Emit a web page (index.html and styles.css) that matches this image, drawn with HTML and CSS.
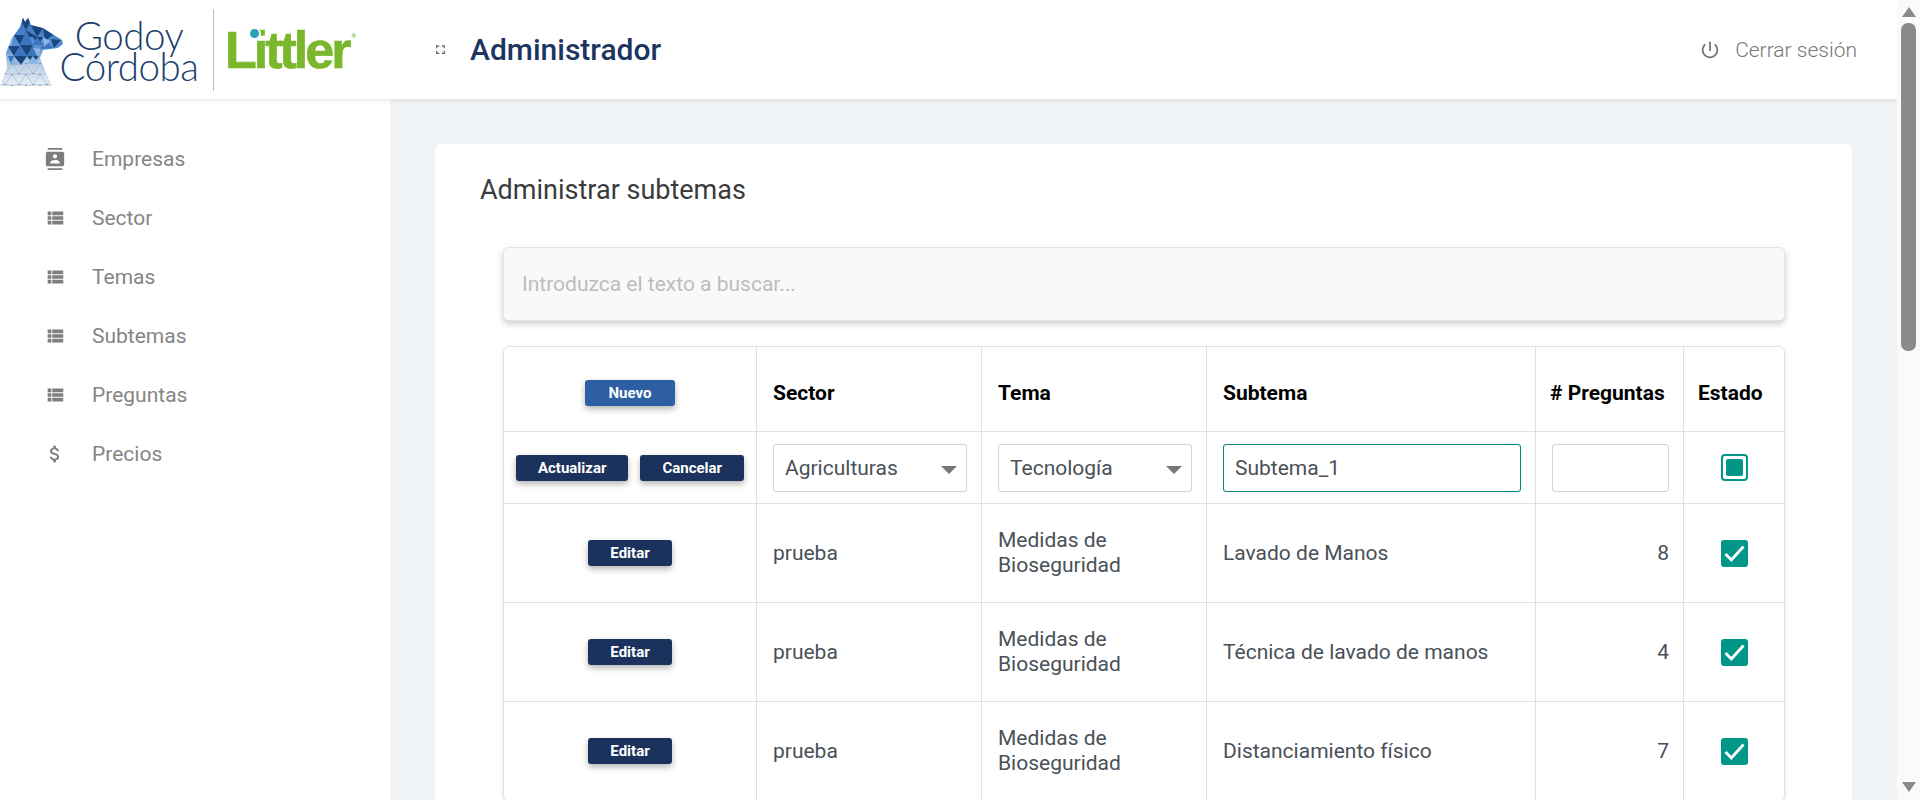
FILE: index.html
```html
<!DOCTYPE html>
<html lang="en">
<head>
  <meta charset="UTF-8" />
  <title>Administrador</title>
  <link rel="stylesheet" href="styles.css">
</head>
<body>

  <svg class="defs" width="0" height="0">
    <symbol id="i-contacts" viewBox="0 0 24 24"><path d="M20 0H4v2h16V0zM4 24h16v-2H4v2zM20 4H4c-1.1 0-2 .9-2 2v12c0 1.1.9 2 2 2h16c1.1 0 2-.9 2-2V6c0-1.1-.9-2-2-2zm-8 2.75c1.24 0 2.25 1.01 2.25 2.25s-1.01 2.25-2.25 2.25S9.75 10.24 9.75 9 10.76 6.75 12 6.75zM17 17H7v-1.5c0-1.67 3.33-2.5 5-2.5s5 .83 5 2.5V17z"/></symbol>
    <symbol id="i-list" viewBox="0 0 24 24"><path d="M4 14h4v-4H4v4zm0 5h4v-4H4v4zM4 9h4V5H4v4zm5 5h12v-4H9v4zm0 5h12v-4H9v4zM9 5v4h12V5H9z"/></symbol>
    <symbol id="i-money" viewBox="0 0 24 24"><path d="M11.8 10.9c-2.27-.59-3-1.2-3-2.15 0-1.09 1.01-1.85 2.7-1.85 1.78 0 2.44.85 2.5 2.1h2.21c-.07-1.72-1.12-3.3-3.21-3.81V3h-3v2.16c-1.94.42-3.5 1.68-3.5 3.61 0 2.31 1.91 3.46 4.7 4.13 2.5.6 3 1.48 3 2.41 0 .69-.49 1.79-2.7 1.79-2.06 0-2.87-.92-2.98-2.1h-2.2c.12 2.19 1.76 3.42 3.68 3.83V21h3v-2.15c1.95-.37 3.5-1.5 3.5-3.55 0-2.84-2.43-3.81-4.7-4.4z"/></symbol>
    <symbol id="i-check" viewBox="0 0 24 24"><path d="M4 12.5l5.2 5.2L20 5.8" fill="none" stroke="#fff" stroke-width="2.6"/></symbol>
  </svg>

  <div class="window">
    <div class="viewport">

      <header class="topbar">
        <div class="logo">
          <svg class="horse" width="64" height="84" viewBox="0 0 64 84">
            <defs>
              <clipPath id="horseShape">
                <path d="M23 10l2 4 3-4 3 7 12 3 19 12 1 4-5 4-15 2-3 8 5 13 7 15H0l7-18-1-15 6-15 8-11z"/>
              </clipPath>
              <linearGradient id="horseFade" x1="0" y1="0" x2="0" y2="1">
                <stop offset="0" stop-color="#2a62a8"/>
                <stop offset=".5" stop-color="#5f97d6"/>
                <stop offset=".66" stop-color="#b9cde4"/>
                <stop offset="1" stop-color="#f7f9fc"/>
              </linearGradient>
              <pattern id="mesh" x="-2" y="55" width="14" height="11" patternUnits="userSpaceOnUse">
                <path d="M0 0h14L7 11zM0 11h14" fill="none" stroke="#9bb2cc" stroke-width=".6"/>
                <circle cx="0" cy="0" r="1" fill="#6f8fb4"/>
                <circle cx="14" cy="0" r="1" fill="#6f8fb4"/>
                <circle cx="7" cy="11" r="1" fill="#6f8fb4"/>
              </pattern>
            </defs>
            <g clip-path="url(#horseShape)">
              <rect width="64" height="84" fill="url(#horseFade)"/>
              <path class="f-dark" d="M20 10h12l-6 12zM31 17l12 3-6 9zM14 27h12l-6 10zM26 22l11 7H25zM8 38h12l-6 10zM20 37h13l-6 11zM33 29h10l-5 8zM43 20l10 7-8 6zM14 48h13l-6 9zM27 48h12l-6 8zM51 31l10 1-7 8z"/>
              <path class="f-mid" d="M26 22l-6 15h13zM37 29l-4 8h10zM45 33l9 7-14 1zM20 37l-6 11h13zM33 37l-6 11h12zM8 48h6l-3 9z"/>
              <path class="f-light" d="M43 29l7 4-6 6zM12 28h2l-3 10h-3zM33 40l8 1-3 8zM27 56l6-8 6 8zM14 50l6 7H9z"/>
              <rect y="55" width="64" height="29" fill="url(#mesh)"/>
            </g>
          </svg>
          <div class="logo-name"><span>Godoy</span><span>Córdoba</span></div>
          <div class="logo-rule"></div>
          <div class="littler">Littler<sup>®</sup><i class="littler-dot"></i></div>
        </div>
        <div class="topbar-title">
          <svg class="icon-expand" viewBox="0 0 24 24"><path d="M7 14H5v5h5v-2H7v-3zm-2-4h2V7h3V5H5v5zm12 7h-3v2h5v-5h-2v3zM14 5v2h3v3h2V5h-5z"/></svg>
          <h1>Administrador</h1>
        </div>
        <a class="logout">
          <svg viewBox="0 0 24 24"><path d="M13 3h-2v10h2V3zm4.83 2.17l-1.42 1.42C17.99 7.86 19 9.81 19 12c0 3.87-3.13 7-7 7s-7-3.13-7-7c0-2.19 1.01-4.14 2.58-5.42L6.17 5.17C4.23 6.82 3 9.26 3 12c0 4.97 4.03 9 9 9s9-4.03 9-9c0-2.74-1.23-5.18-3.17-6.83z"/></svg>
          Cerrar sesión
        </a>
      </header>

      <div class="layout">
        <nav class="sidebar">
          <a class="nav-item"><svg><use href="#i-contacts"/></svg>Empresas</a>
          <a class="nav-item"><svg><use href="#i-list"/></svg>Sector</a>
          <a class="nav-item"><svg><use href="#i-list"/></svg>Temas</a>
          <a class="nav-item"><svg><use href="#i-list"/></svg>Subtemas</a>
          <a class="nav-item"><svg><use href="#i-list"/></svg>Preguntas</a>
          <a class="nav-item"><svg><use href="#i-money"/></svg>Precios</a>
        </nav>

        <main class="content">
          <section class="card">
            <h2>Administrar subtemas</h2>
            <div class="search">Introduzca el texto a buscar...</div>

            <table class="grid">
              <colgroup>
                <col class="col-actions"><col class="col-sector"><col class="col-tema"><col class="col-subtema"><col class="col-count"><col class="col-state">
              </colgroup>
              <thead>
                <tr>
                  <th class="center"><button class="btn btn-new">Nuevo</button></th>
                  <th>Sector</th>
                  <th>Tema</th>
                  <th>Subtema</th>
                  <th class="tight"># Preguntas</th>
                  <th class="tight">Estado</th>
                </tr>
              </thead>
              <tbody>
                <tr class="row-edit">
                  <td class="center nowrap"><button class="btn">Actualizar</button><button class="btn">Cancelar</button></td>
                  <td><div class="field select">Agriculturas<i class="caret"></i></div></td>
                  <td><div class="field select">Tecnología<i class="caret"></i></div></td>
                  <td><div class="field active">Subtema_1</div></td>
                  <td><div class="field"></div></td>
                  <td class="center"><span class="box-empty"><i></i></span></td>
                </tr>
                <tr class="row-data">
                  <td class="center"><button class="btn btn-edit">Editar</button></td>
                  <td>prueba</td>
                  <td>Medidas de Bioseguridad</td>
                  <td>Lavado de Manos</td>
                  <td class="num">8</td>
                  <td class="center"><span class="box"><svg><use href="#i-check"/></svg></span></td>
                </tr>
                <tr class="row-data">
                  <td class="center"><button class="btn btn-edit">Editar</button></td>
                  <td>prueba</td>
                  <td>Medidas de Bioseguridad</td>
                  <td>Técnica de lavado de manos</td>
                  <td class="num">4</td>
                  <td class="center"><span class="box"><svg><use href="#i-check"/></svg></span></td>
                </tr>
                <tr class="row-data">
                  <td class="center"><button class="btn btn-edit">Editar</button></td>
                  <td>prueba</td>
                  <td>Medidas de Bioseguridad</td>
                  <td>Distanciamiento físico</td>
                  <td class="num">7</td>
                  <td class="center"><span class="box"><svg><use href="#i-check"/></svg></span></td>
                </tr>
              </tbody>
            </table>
          </section>
        </main>
      </div>
    </div>

    <div class="scrollbar">
      <i class="arrow-up"></i>
      <div class="track"><div class="thumb"></div></div>
      <i class="arrow-down"></i>
    </div>
  </div>

</body>
</html>
```

FILE: styles.css
```css
* {
  box-sizing: border-box;
}

html, body {
  margin: 0;
  padding: 0;
  height: 800px;
  overflow: hidden;
}

body {
  font-family: Roboto, sans-serif;
  color: #495057;
  background: #fff;
}

.defs {
  display: block;
  height: 0;
}

.window {
  display: flex;
  height: 800px;
}

.viewport {
  flex: 1;
  min-width: 0;
  height: 800px;
  overflow: hidden;
  display: flex;
  flex-direction: column;
}

/* top bar */
.topbar {
  height: 99px;
  flex: none;
  display: flex;
  align-items: center;
  background: #fff;
  box-shadow: 0 2px 4px rgba(0,0,0,0.08);
  position: relative;
  z-index: 2;
  padding-right: 40px;
}

.logo {
  width: 433px;
  flex: none;
  display: flex;
  align-items: center;
}

.horse {
  flex: none;
  align-self: flex-start;
}

.f-dark { fill: #1a4680; }
.f-mid { fill: #3a75bd; }
.f-light { fill: #8db6e4; }

.logo-name {
  width: 142px;
  margin: 2px 0 0 -6px;
  display: flex;
  flex-direction: column;
  align-items: center;
  font-family: Lato, sans-serif;
  font-weight: 300;
  font-size: 38.5px;
  line-height: 31px;
  letter-spacing: -0.5px;
  color: #1d3f6e;
}

.logo-rule {
  width: 1px;
  height: 82px;
  margin-left: 13px;
  background: #bdbdbd;
}

.littler {
  position: relative;
  margin-left: 11px;
  font-family: "Liberation Sans", sans-serif;
  font-weight: 700;
  font-size: 52px;
  letter-spacing: -3px;
  line-height: 50px;
  color: #7ab72c;
  -webkit-text-stroke: 0.7px #7ab72c;
}

.littler sup {
  position: absolute;
  top: 8px;
  margin-left: 3px;
  font-size: 6px;
  line-height: 6px;
  letter-spacing: 0;
  -webkit-text-stroke: 0;
}

.littler-dot {
  position: absolute;
  left: 25px;
  top: 4px;
  width: 9px;
  height: 9px;
  border-radius: 50%;
  background: #2a9fb5;
  box-shadow: 0 0 0 2px #fff;
}

.topbar-title {
  flex: 1;
  display: flex;
  align-items: center;
}

.icon-expand {
  width: 15px;
  height: 15px;
  fill: #666;
}

h1 {
  margin: 0 0 0 22px;
  font-size: 30px;
  font-weight: 500;
  color: #1c3560;
}

.logout {
  display: flex;
  align-items: center;
  gap: 14px;
  font-size: 21px;
  font-weight: 300;
  color: #777;
}

.logout svg {
  width: 22px;
  height: 22px;
  fill: #777;
}

/* sidebar */
.layout {
  flex: 1;
  min-height: 0;
  display: flex;
}

.sidebar {
  width: 390px;
  flex: none;
  padding-top: 30px;
  background: #fff;
}

.nav-item {
  display: flex;
  align-items: center;
  height: 59px;
  padding-left: 44px;
  font-size: 21px;
  color: #858585;
}

.nav-item svg {
  width: 22px;
  height: 22px;
  margin-right: 26px;
  fill: #7e7e7e;
}

/* content */
.content {
  flex: 1;
  min-width: 0;
  padding: 45px 45px 0;
  background: #eff3f5;
}

.card {
  background: #fff;
  border-radius: 6px;
  padding: 28px 67px 0 45px;
}

h2 {
  margin: 0 0 39px;
  font-size: 27px;
  font-weight: 400;
  line-height: 36px;
  color: #3b3b3b;
}

.search {
  margin: 0 0 25px 23px;
  height: 74px;
  padding: 0 18px;
  display: flex;
  align-items: center;
  background: #f9f9f9;
  border: 1px solid #e3e3e3;
  border-radius: 6px;
  box-shadow: 0 3px 6px rgba(0,0,0,0.2);
  font-size: 21px;
  color: #bdbdbd;
}

.grid {
  margin-left: 23px;
  width: 1282px;
  table-layout: fixed;
  border-collapse: separate;
  border-spacing: 0;
  border: 1px solid #dee2e6;
  border-radius: 6px;
  box-shadow: 0 1px 4px rgba(0,0,0,0.1);
  font-size: 21px;
  color: #495057;
}

.col-actions { width: 253px; }
.col-sector { width: 225px; }
.col-tema { width: 225px; }
.col-subtema { width: 329px; }
.col-count { width: 148px; }
.col-state { width: 100px; }

.grid th, .grid td {
  padding: 0 14px 0 16px;
  border-right: 1px solid #dee2e6;
  border-bottom: 1px solid #dee2e6;
  text-align: left;
}

.grid th:last-child, .grid td:last-child {
  border-right: none;
}

.grid th {
  height: 85px;
  padding-top: 7px;
  font-weight: 700;
  font-size: 21px;
  color: #000;
}

.grid .tight {
  padding: 7px 14px 0;
  white-space: nowrap;
}

.grid .center {
  padding-left: 0;
  padding-right: 0;
  text-align: center;
}

.grid .nowrap {
  white-space: nowrap;
}

.grid .num {
  text-align: right;
}

.row-edit td {
  height: 72px;
}

.row-data td {
  height: 99px;
  line-height: 25px;
}

/* buttons */
.btn {
  height: 26px;
  padding: 0 22px;
  border: none;
  border-radius: 3px;
  background: #1b335c;
  color: #fff;
  font-family: Roboto, sans-serif;
  font-size: 15px;
  font-weight: 700;
  box-shadow: 0 3px 6px rgba(0,0,0,0.3);
  vertical-align: middle;
}

.btn + .btn {
  margin-left: 12px;
}

.btn-new {
  width: 90px;
  padding: 0;
  background: #2e5ea3;
}

.btn-edit {
  width: 84px;
  padding: 0;
}

/* form fields */
.field {
  position: relative;
  height: 48px;
  display: flex;
  align-items: center;
  padding: 1px 11px 0;
  background: #fff;
  border: 1px solid #ced4da;
  border-radius: 3px;
  font-size: 21px;
}

.field.active {
  border-color: #00897b;
}

.caret {
  position: absolute;
  right: 9px;
  top: 21px;
  border-left: 8px solid transparent;
  border-right: 8px solid transparent;
  border-top: 8px solid #777;
}

.box, .box-empty {
  display: inline-block;
  width: 27px;
  height: 27px;
  border-radius: 3px;
  vertical-align: middle;
}

.box {
  background: #009688;
}

.box svg {
  display: block;
  width: 27px;
  height: 27px;
}

.box-empty {
  padding: 3px;
  border: 2px solid #009688;
  border-radius: 4px;
}

.box-empty i {
  display: block;
  width: 100%;
  height: 100%;
  border-radius: 2px;
  background: #009688;
}

/* scrollbar */
.scrollbar {
  width: 23px;
  flex: none;
  height: 800px;
  background: #fafafa;
  display: flex;
  flex-direction: column;
  align-items: center;
  padding: 7px 0 8px;
}

.track {
  flex: 1;
  width: 100%;
  padding: 6px 4px 0;
}

.thumb {
  height: 328px;
  border-radius: 7px;
  background: #8a8a8a;
}

.arrow-up {
  border-left: 7px solid transparent;
  border-right: 7px solid transparent;
  border-bottom: 10px solid #8a8a8a;
}

.arrow-down {
  border-left: 7px solid transparent;
  border-right: 7px solid transparent;
  border-top: 10px solid #8a8a8a;
}
```
